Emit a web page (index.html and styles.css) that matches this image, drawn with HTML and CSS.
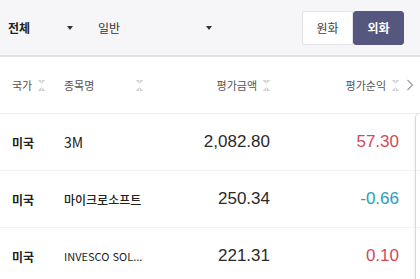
FILE: index.html
```html
<!DOCTYPE html>
<html lang="ko">
<head>
<meta charset="utf-8">
<link rel="stylesheet" href="styles.css">
</head>
<body>
<div class="topbar">
  <div class="select sel-all"><span>전체</span><i class="caret"></i></div>
  <div class="select sel-type"><span>일반</span><i class="caret"></i></div>
  <div class="toggle">
    <button class="tbtn">원화</button>
    <button class="tbtn active">외화</button>
  </div>
</div>
<div class="table">
  <div class="row head">
    <div class="cell">국가<i class="sort"></i></div>
    <div class="cell">종목명<i class="sort sort-name"></i></div>
    <div class="cell num">평가금액<i class="sort"></i></div>
    <div class="cell num">평가순익<i class="sort"></i></div>
    <div class="cell chev"><svg width="8" height="12" viewBox="0 0 8 12"><path d="M1.5 1 L6.5 6 L1.5 11" fill="none" stroke="#9a9a9a" stroke-width="1.1"/></svg></div>
  </div>
  <div class="row">
    <div class="cell country">미국</div>
    <div class="cell name latin">3M</div>
    <div class="cell num val">2,082.80</div>
    <div class="cell num val up">57.30</div>
  </div>
  <div class="row">
    <div class="cell country">미국</div>
    <div class="cell name">마이크로소프트</div>
    <div class="cell num val">250.34</div>
    <div class="cell num val down">-0.66</div>
  </div>
  <div class="row">
    <div class="cell country">미국</div>
    <div class="cell name small">INVESCO SOL...</div>
    <div class="cell num val">221.31</div>
    <div class="cell num val up">0.10</div>
  </div>
  <div class="edge"></div>
</div>
</body>
</html>
```
FILE: styles.css
```css
html, body { margin: 0; padding: 0; background: #fff; }
body {
  width: 420px; height: 279px; overflow: hidden;
  font-family: "Noto Sans CJK KR", "Noto Sans", sans-serif;
  color: #222;
}
.topbar {
  height: 55px;
  background: #f6f6f8;
  border-bottom: 2px solid #e2e2e5;
  display: flex; align-items: center;
  padding-left: 8px;
}
.select { display: flex; align-items: center; font-size: 12px; }
.sel-all { width: 90px; font-weight: 700; color: #222; }
.sel-all .caret { margin-left: 37px; }
.sel-type { width: 124px; color: #333; }
.sel-type .caret { margin-left: 86px; }
.caret {
  width: 0; height: 0;
  border-left: 3.5px solid transparent; border-right: 3.5px solid transparent;
  border-top: 4px solid #333;
}
.toggle { display: flex; margin-left: 80px; }
.tbtn {
  width: 51px; height: 34px;
  font-family: "Noto Sans CJK KR", sans-serif; font-size: 12px;
  border: 1px solid #e3e3e6; background: #fff; color: #444;
  padding: 0; border-radius: 3px 0 0 3px;
}
.tbtn.active {
  background: #55577f; color: #fff; font-weight: 700;
  border-color: #55577f; border-radius: 3px;
}
.table { position: relative; height: 222px; overflow: hidden; }
.row {
  display: grid;
  grid-template-columns: 52px 120px 86px 129px 21px;
  padding-left: 12px;
  height: 57px;
  align-items: center;
  border-bottom: 1px solid #f3f3f4;
  box-sizing: border-box;
}
.row.head { border-bottom: 1px solid #ededef; }
.head .cell {
  font-size: 11px; color: #555;
  display: flex; align-items: center;
}
.head .cell.num { justify-content: flex-end; }
.sort {
  display: inline-block; width: 7px; height: 11px; margin-left: 6px;
  background:
    linear-gradient(to top right, transparent 50%, #d6d6d8 50%) 0 0/3.5px 4px no-repeat,
    linear-gradient(to top left, transparent 50%, #d6d6d8 50%) 3.5px 0/3.5px 4px no-repeat,
    linear-gradient(to bottom right, transparent 50%, #d6d6d8 50%) 0 7px/3.5px 4px no-repeat,
    linear-gradient(to bottom left, transparent 50%, #d6d6d8 50%) 3.5px 7px/3.5px 4px no-repeat;
}
.sort-name { margin-left: 42px; }
.head .chev { justify-content: flex-end; padding-right: 6px; }
.country { font-size: 12px; font-weight: 700; color: #222; }
.name { font-size: 12px; color: #222; font-weight: 500; }
.name.latin { font-size: 14px; font-weight: 400; }
.name.small { font-size: 11px; font-weight: 400; }
.num { text-align: right; }
.val { font-family: "Liberation Sans", Arial, sans-serif; font-size: 17px; color: #2a2a2a; }
.up { color: #cf4a5a; }
.down { color: #2b9db8; }
.edge {
  position: absolute; left: 415px; top: 56px; width: 20px; height: 240px;
  border-left: 1px solid #d8d8da; border-top: 1px solid #e6e6e8;
  border-top-left-radius: 5px;
  box-shadow: -1px 0 2px rgba(0,0,0,0.05);
}
```
